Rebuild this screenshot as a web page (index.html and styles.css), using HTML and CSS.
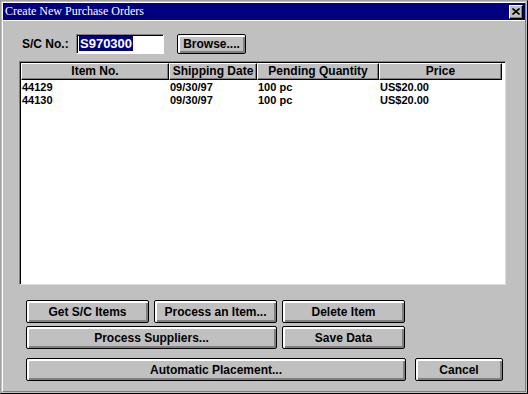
FILE: index.html
```html
<!DOCTYPE html>
<html lang="en">
<head>
    <meta charset="UTF-8">
    <title>Create New Purchase Orders</title>
    <link rel="stylesheet" href="styles.css">
</head>
<body>
    <div class="window">
        <div class="frame">
            <div class="titlebar">
                <span class="title">Create New Purchase Orders</span>
                <span class="close">
                    <svg width="8" height="7" viewBox="0 0 8 7">
                        <path d="M0.5 0.5 L7.5 6.5 M7.5 0.5 L0.5 6.5" stroke="#000" stroke-width="1.6" fill="none"/>
                    </svg>
                </span>
            </div>

            <div class="content">
                <div class="sc-row">
                    <label class="sc-label" for="sc">S/C No.:</label>
                    <div class="sc-input"><span class="selected">S970300</span></div>
                    <button class="btn browse">Browse....</button>
                </div>

                <div class="listview">
                    <div class="list-header">
                        <div class="col c1">Item No.</div>
                        <div class="col c2">Shipping Date</div>
                        <div class="col c3">Pending Quantity</div>
                        <div class="col c4">Price</div>
                    </div>
                    <div class="list-body">
                        <div class="row">
                            <span class="c1">44129</span>
                            <span class="c2">09/30/97</span>
                            <span class="c3">100 pc</span>
                            <span class="c4">US$20.00</span>
                        </div>
                        <div class="row">
                            <span class="c1">44130</span>
                            <span class="c2">09/30/97</span>
                            <span class="c3">100 pc</span>
                            <span class="c4">US$20.00</span>
                        </div>
                    </div>
                </div>

                <div class="actions">
                    <div class="grid">
                        <button class="btn">Get S/C Items</button>
                        <button class="btn">Process an Item...</button>
                        <button class="btn">Delete Item</button>
                        <button class="btn span2">Process Suppliers...</button>
                        <button class="btn">Save Data</button>
                    </div>
                    <div class="last-row">
                        <button class="btn auto">Automatic Placement...</button>
                        <button class="btn cancel">Cancel</button>
                    </div>
                </div>
            </div>
        </div>
    </div>
</body>
</html>
```

FILE: styles.css
```css
* {
    margin: 0;
    padding: 0;
    box-sizing: border-box;
}

body {
    font-family: 'Liberation Sans', Arial, sans-serif;
    font-size: 12px;
    font-weight: bold;
    color: #000;
    background: #c0c0c0;
}

.window {
    width: 528px;
    height: 394px;
    background: #c0c0c0;
    border: 1px solid;
    border-color: #a0a0a0 #000 #000 #a0a0a0;
    padding: 1px;
}

.frame {
    height: 100%;
    border: 1px solid;
    border-color: #fff #808080 #808080 #fff;
}

.titlebar {
    height: 18px;
    background: #000080;
    display: flex;
    align-items: center;
    justify-content: space-between;
    padding: 0 2px 0 2px;
    border-bottom: 1px solid #fff;
}

.title {
    font-family: 'Liberation Serif', 'Times New Roman', serif;
    font-weight: normal;
    font-size: 12px;
    color: #fff;
}

.close {
    width: 14px;
    height: 14px;
    background: #c0c0c0;
    border: 1px solid;
    border-color: #fff #000 #000 #fff;
    box-shadow: inset -1px -1px #808080;
    display: flex;
    align-items: center;
    justify-content: center;
}

.close svg {
    display: block;
}

.content {
    padding: 13px 0 0 16px;
}

.sc-row {
    display: flex;
    align-items: center;
    height: 20px;
    padding-left: 3px;
}

.sc-label {
    width: 54px;
}

.sc-input {
    width: 88px;
    height: 20px;
    background: #fff;
    border: 1px solid;
    border-color: #808080 #fff #fff #808080;
    box-shadow: inset 1px 1px #000;
    padding: 1px 0 0 2px;
    line-height: 15px;
}

.selected {
    display: inline-block;
    background: #000080;
    color: #fff;
    padding: 0 1px;
    font-size: 13px;
}

.btn {
    font-family: 'Liberation Sans', Arial, sans-serif;
    font-size: 12px;
    font-weight: bold;
    color: #000;
    background: #c0c0c0;
    border: 1px solid #000;
    border-radius: 2px;
    box-shadow: inset 1px 1px #fff, inset 2px 2px #fff, inset -1px -1px #808080, inset -2px -2px #808080;
    height: 23px;
}

.browse {
    width: 69px;
    height: 20px;
    margin-left: 13px;
}

.listview {
    margin-top: 7px;
    width: 487px;
    height: 224px;
    background: #fff;
    border: 1px solid;
    border-color: #808080 #dcdcdc #dcdcdc #808080;
    box-shadow: inset 1px 1px #000;
    padding: 1px 0 0 1px;
}

.list-header {
    display: flex;
    height: 17px;
}

.col {
    background: #c0c0c0;
    border: 1px solid;
    border-color: #fff #000 #000 #fff;
    box-shadow: inset -1px -1px #808080;
    text-align: center;
    line-height: 15px;
}

.c1 { width: 148px; }
.c2 { width: 88px; }
.c3 { width: 122px; }
.c4 { width: 123px; }

.list-body {
    padding-top: 1px;
}

.row {
    display: flex;
    height: 13px;
    line-height: 13px;
    font-size: 11px;
}

.row span {
    padding-left: 1px;
}

.actions {
    margin-top: 15px;
    padding-left: 7px;
}

.grid {
    display: grid;
    grid-template-columns: 123px 123px 123px;
    column-gap: 5px;
    row-gap: 3px;
}

.span2 {
    grid-column: span 2;
}

.last-row {
    display: flex;
    gap: 9px;
    margin-top: 9px;
}

.auto {
    width: 380px;
}

.cancel {
    width: 88px;
}
```
